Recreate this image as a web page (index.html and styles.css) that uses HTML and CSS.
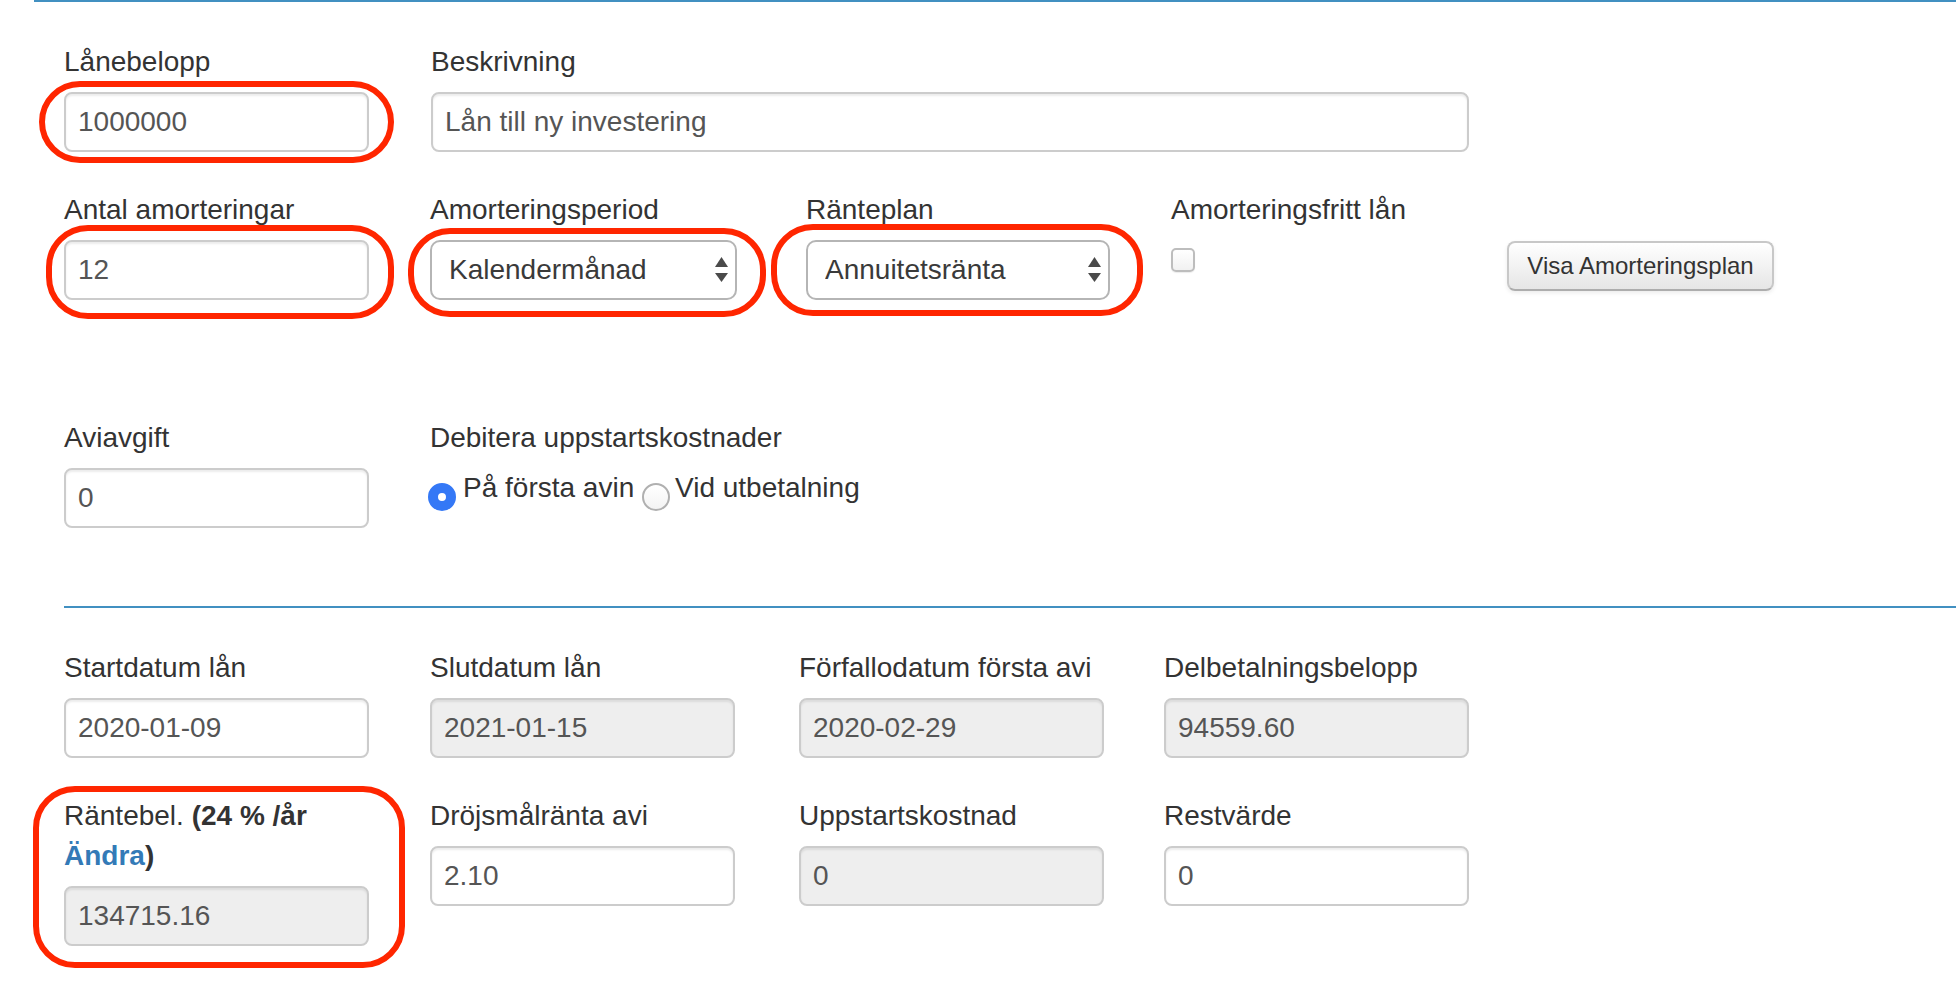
FILE: index.html
```html
<!DOCTYPE html>
<html lang="sv">
<head>
    <meta charset="UTF-8">
    <meta name="viewport" content="width=device-width, initial-scale=1.0">
    <title>Lån</title>
    <link rel="stylesheet" href="styles.css">
</head>
<body>

<div class="page">
    <div class="topline"></div>

    <form class="loan-form">
        <div class="row row-1">
            <div class="field col-a">
                <label>Lånebelopp</label>
                <input type="text" value="1000000">
            </div>
            <div class="field col-wide">
                <label>Beskrivning</label>
                <input type="text" value="Lån till ny investering">
            </div>
        </div>

        <div class="row row-2">
            <div class="field col-a">
                <label>Antal amorteringar</label>
                <input type="text" value="12">
            </div>
            <div class="field col-b">
                <label>Amorteringsperiod</label>
                <div class="select-wrap">
                    <select>
                        <option>Kalendermånad</option>
                    </select>
                    <svg class="select-arrows" width="13" height="26" viewBox="0 0 13 26">
                        <polygon points="0,10 6.5,0 13,10" />
                        <polygon points="0,16 13,16 6.5,25" />
                    </svg>
                </div>
            </div>
            <div class="field col-c">
                <label>Ränteplan</label>
                <div class="select-wrap">
                    <select>
                        <option>Annuitetsränta</option>
                    </select>
                    <svg class="select-arrows" width="13" height="26" viewBox="0 0 13 26">
                        <polygon points="0,10 6.5,0 13,10" />
                        <polygon points="0,16 13,16 6.5,25" />
                    </svg>
                </div>
            </div>
            <div class="field col-d">
                <label>Amorteringsfritt lån</label>
                <input type="checkbox" class="check">
            </div>
            <div class="field col-btn">
                <button type="button" class="btn">Visa Amorteringsplan</button>
            </div>
        </div>

        <div class="row row-3">
            <div class="field col-a">
                <label>Aviavgift</label>
                <input type="text" value="0">
            </div>
            <div class="field">
                <label>Debitera uppstartskostnader</label>
                <div class="radios">
                    <label class="radio"><span class="dot checked"></span>På första avin</label>
                    <label class="radio"><span class="dot"></span>Vid utbetalning</label>
                </div>
            </div>
        </div>

        <div class="divider"></div>

        <div class="grid">
            <div class="field">
                <label>Startdatum lån</label>
                <input type="text" value="2020-01-09">
            </div>
            <div class="field">
                <label>Slutdatum lån</label>
                <input type="text" value="2021-01-15" disabled>
            </div>
            <div class="field">
                <label>Förfallodatum första avi</label>
                <input type="text" value="2020-02-29" disabled>
            </div>
            <div class="field">
                <label>Delbetalningsbelopp</label>
                <input type="text" value="94559.60" disabled>
            </div>

            <div class="field">
                <label>Räntebel. <b>(24 % /år <a href="#">Ändra</a>)</b></label>
                <input type="text" value="134715.16" disabled>
            </div>
            <div class="field">
                <label>Dröjsmålränta avi</label>
                <input type="text" value="2.10">
            </div>
            <div class="field">
                <label>Uppstartskostnad</label>
                <input type="text" value="0" disabled>
            </div>
            <div class="field">
                <label>Restvärde</label>
                <input type="text" value="0">
            </div>
        </div>
    </form>

    <!-- annotation marks -->
    <div class="mark mark-1"></div>
    <div class="mark mark-2"></div>
    <div class="mark mark-3"></div>
    <div class="mark mark-4"></div>
    <div class="mark mark-5"></div>
</div>

</body>
</html>
```

FILE: styles.css
```css
* {
    box-sizing: border-box;
}

body {
    margin: 0;
    background-color: #fff;
    font-family: "Liberation Sans", Arial, Helvetica, sans-serif;
    font-size: 28px;
    line-height: 40px;
    color: #333;
}

.page {
    position: relative;
    min-height: 1004px;
}

.topline {
    margin-left: 34px;
    height: 2px;
    background-color: #4190c1;
}

.loan-form {
    padding: 40px 0 0 64px;
}

.row {
    display: flex;
}

.field {
    margin-bottom: 38px;
}

.field label {
    display: block;
    margin-bottom: 10px;
}

.col-a {
    width: 305px;
    margin-right: 61px;
}

.row-1 .col-a {
    margin-right: 62px;
}

.col-wide {
    width: 1038px;
}

.col-b {
    width: 307px;
    margin-right: 69px;
}

.col-c {
    width: 304px;
    margin-right: 61px;
}

.col-d {
    width: 336px;
}

.col-btn {
    padding-top: 51px;
}

.row-2 .field {
    margin-bottom: 118px;
}

input[type="text"] {
    display: block;
    width: 100%;
    height: 60px;
    padding: 8px 12px;
    border: 2px solid #ccc;
    border-radius: 8px;
    background-color: #fff;
    box-shadow: inset 0 2px 2px rgba(0, 0, 0, 0.075);
    font: inherit;
    line-height: 40px;
    color: #555;
}

input[disabled] {
    background-color: #eee;
}

.select-wrap {
    position: relative;
}

select {
    display: block;
    width: 100%;
    height: 60px;
    padding: 0 40px 0 17px;
    border: 2px solid #b5b5b5;
    border-radius: 10px;
    background-color: #fff;
    font: inherit;
    color: #3a3a3a;
    -webkit-appearance: none;
    appearance: none;
}

.select-arrows {
    position: absolute;
    top: 17px;
    right: 9px;
    fill: #4a4a4a;
    pointer-events: none;
}

.check {
    display: block;
    width: 24px;
    height: 24px;
    margin: 18px 0 0 0;
    border: 2px solid #bdbdbd;
    border-radius: 5px;
    background: linear-gradient(#fff, #f1f1f1);
    box-shadow: 0 1px 1px rgba(0, 0, 0, 0.08);
    -webkit-appearance: none;
    appearance: none;
}

.btn {
    width: 267px;
    height: 50px;
    padding: 0;
    border: 2px solid #c8c8c8;
    border-bottom-color: #adadad;
    border-radius: 8px;
    background: linear-gradient(#ffffff, #e6e6e6);
    box-shadow: inset 0 2px 0 rgba(255, 255, 255, 0.2), 0 2px 4px rgba(0, 0, 0, 0.08);
    font-family: inherit;
    font-size: 24px;
    color: #333;
    cursor: pointer;
}

.radios {
    margin-left: -2px;
}

.field .radio {
    display: inline;
    margin: 0;
}

.dot {
    display: inline-block;
    width: 28px;
    height: 28px;
    margin-right: 7px;
    border: 2px solid #b0b0b0;
    border-radius: 50%;
    background: linear-gradient(#fff, #f3f3f3);
    vertical-align: -14px;
}

.radio + .radio .dot {
    margin-right: 5px;
}

.dot.checked {
    border: 10px solid #3478f6;
    background: #fff;
}

.divider {
    height: 2px;
    margin: 40px 0 40px 0;
    background-color: #4190c1;
}

.grid {
    display: grid;
    grid-template-columns: 366px 369px 365px 305px;
}

.grid .field {
    width: 305px;
}

.grid a {
    color: #337ab7;
    text-decoration: none;
}

.mark {
    position: absolute;
    border: 6px solid #ff2600;
    border-radius: 42px;
    pointer-events: none;
}

.mark-1 { left: 39px; top: 81px; width: 355px; height: 82px; }
.mark-2 { left: 46px; top: 225px; width: 348px; height: 94px; }
.mark-3 { left: 408px; top: 228px; width: 358px; height: 89px; }
.mark-4 { left: 771px; top: 224px; width: 372px; height: 92px; }
.mark-5 { left: 33px; top: 786px; width: 372px; height: 182px; }
```
